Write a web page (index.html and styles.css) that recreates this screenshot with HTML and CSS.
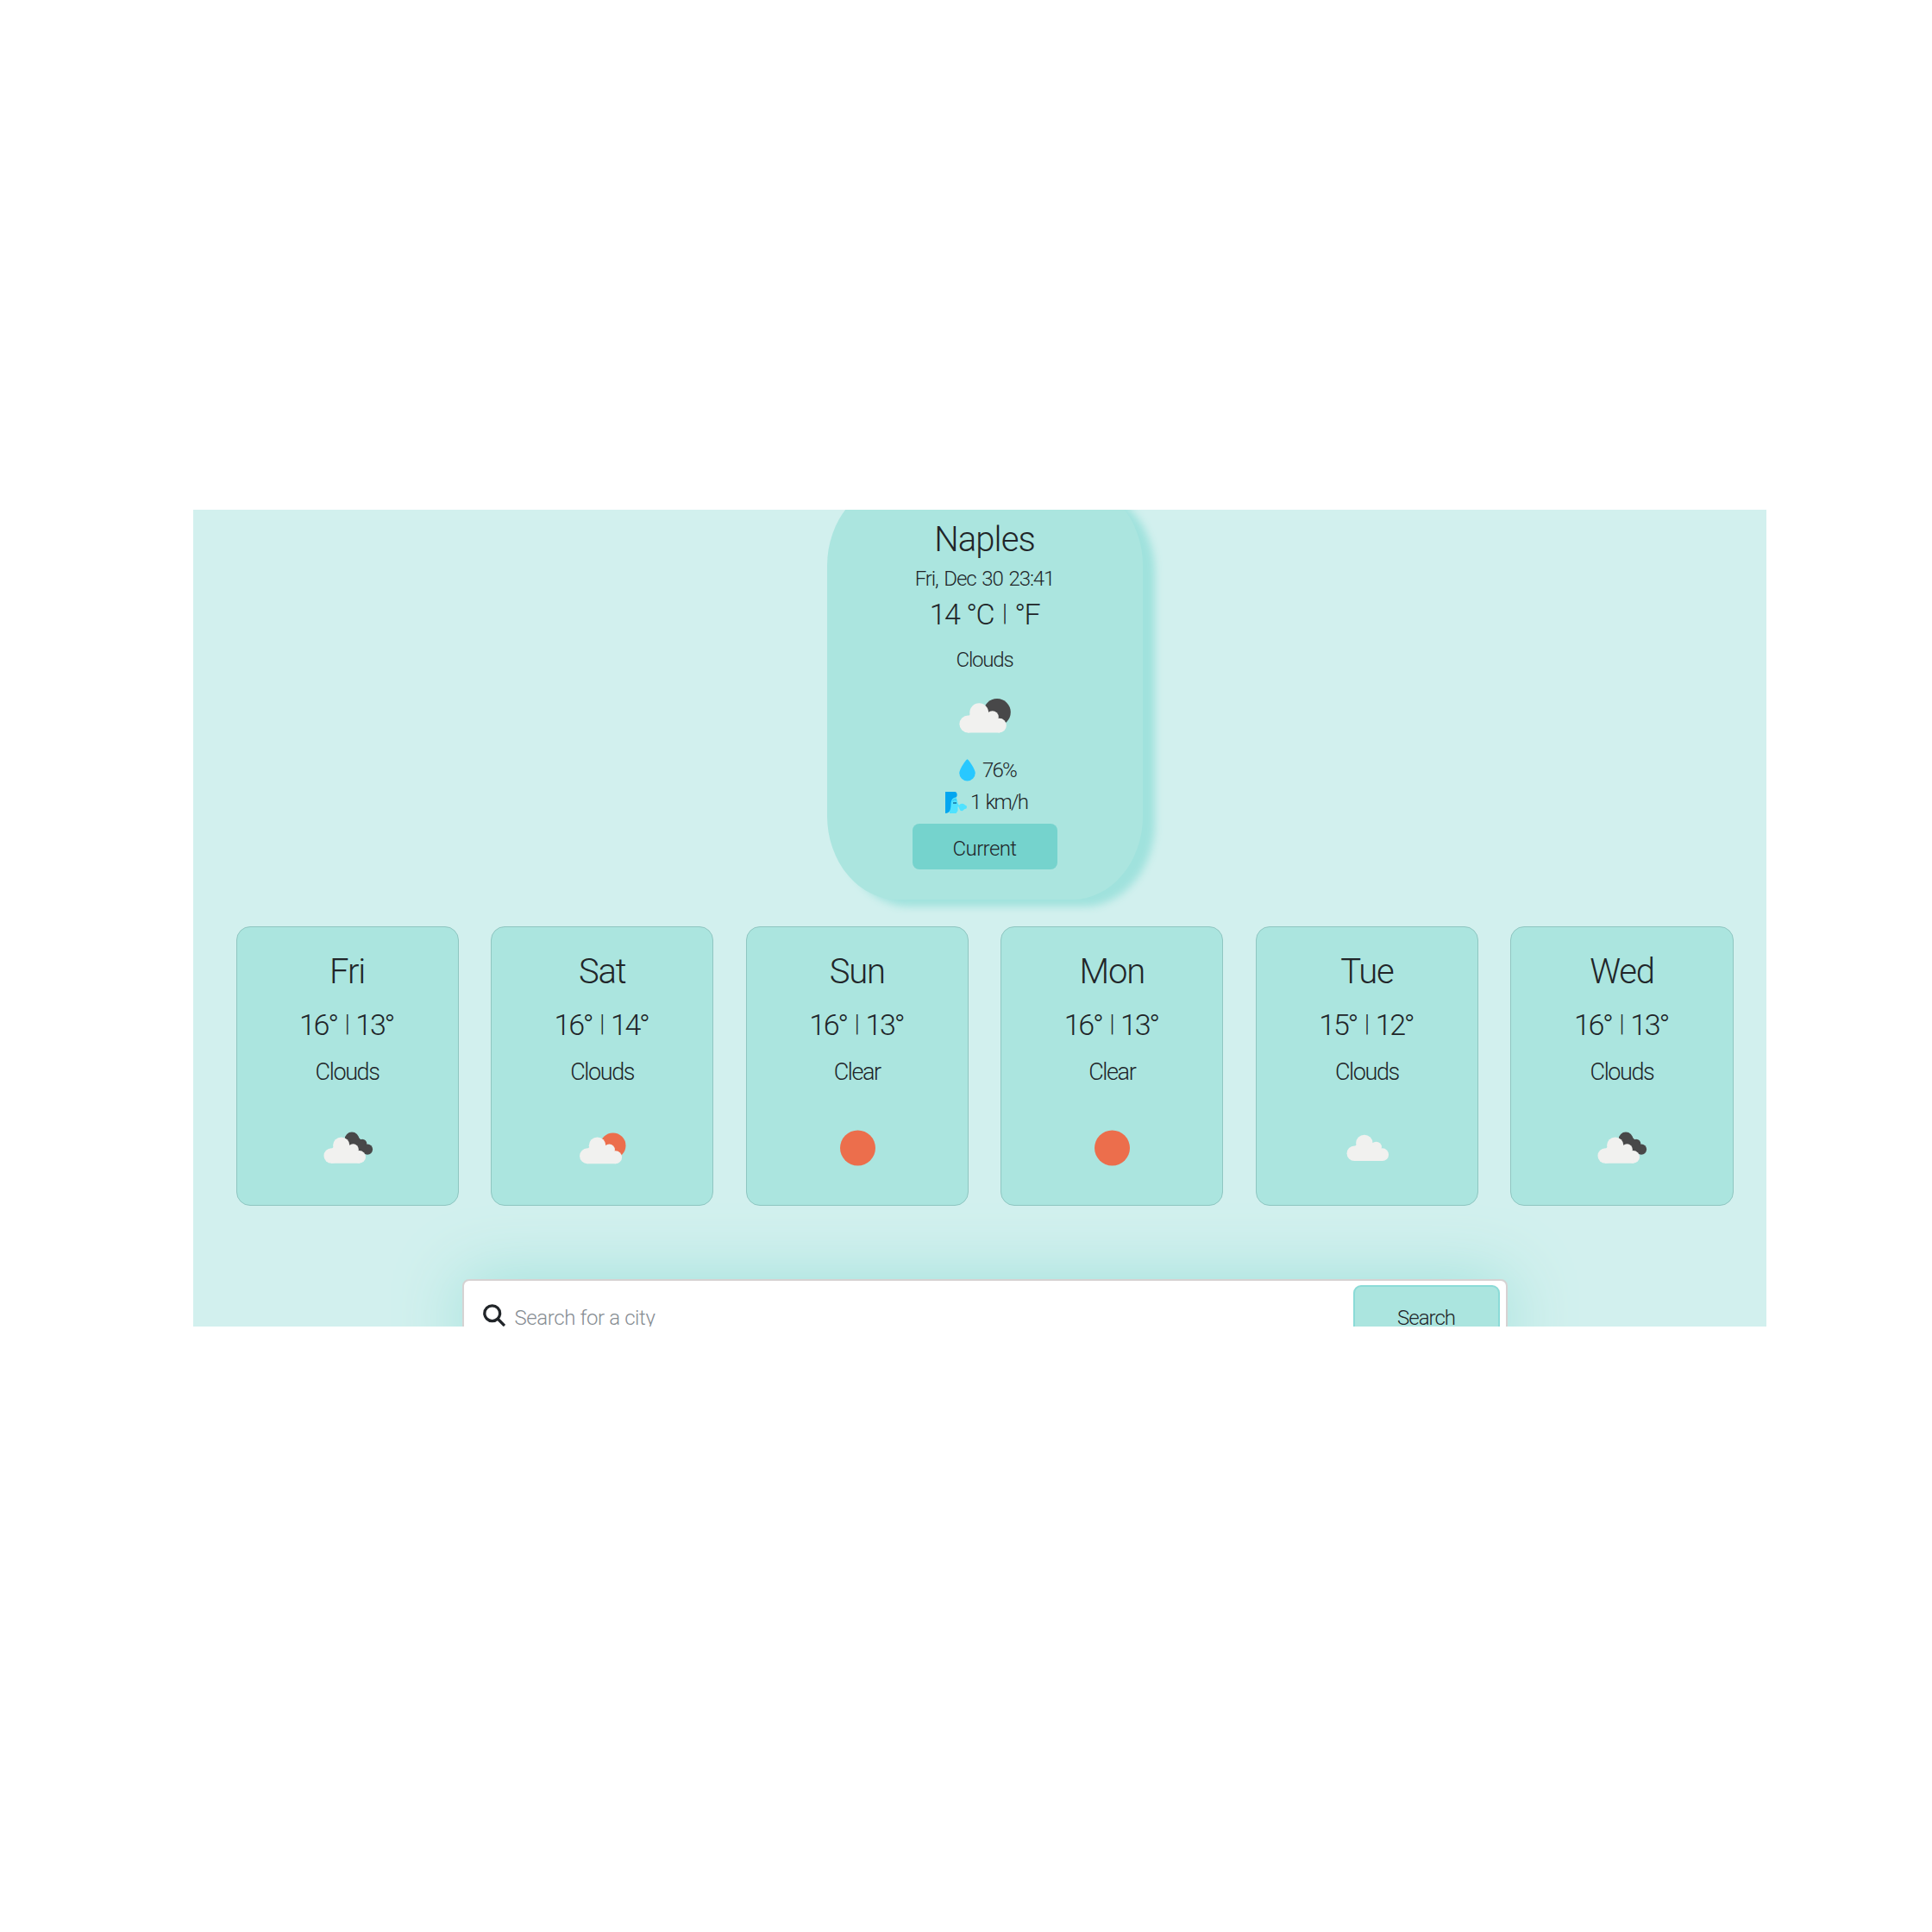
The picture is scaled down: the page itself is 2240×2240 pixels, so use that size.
FILE: index.html
```html
<!DOCTYPE html>
<html lang="en">
<head>
<meta charset="utf-8">
<title>Weather</title>
<link rel="stylesheet" href="styles.css">
</head>
<body>
<svg class="defs" width="0" height="0" aria-hidden="true">
  <symbol id="cloud" viewBox="0 0 60 42" overflow="visible">
    <g fill="#f1f1ef"><circle cx="10.3" cy="29.5" r="9.9"/><circle cx="23.2" cy="16.2" r="10.9"/><circle cx="38.6" cy="21.4" r="7.2"/><circle cx="46.6" cy="31.1" r="8.3"/><path d="M10 21l5-5h24l4 7 4 3v13.4H10z"/></g>
  </symbol>
  <symbol id="broken" viewBox="0 0 60 60" overflow="visible">
    <g fill="#484849"><circle cx="35" cy="19.8" r="8.3"/><circle cx="47" cy="25" r="5.3"/><circle cx="53" cy="31.6" r="6.1"/><path d="M33 20l8-4 8 8 4 11-5 2-14-8z"/></g>
    <use href="#cloud" x="0" y="0" width="60" height="42" transform="translate(2.1 12.7) scale(.89)"/>
  </symbol>
</svg>
<main class="stage">
  <section class="current">
    <h1 class="city">Naples</h1>
    <p class="date">Fri, Dec 30 23:41</p>
    <p class="now">14 <span class="unit">°C</span> <span class="bar">|</span> <span class="unit">°F</span></p>
    <p class="sky">Clouds</p>
    <svg class="now-icon" width="60" height="40" viewBox="0 0 60 40"><circle cx="44" cy="15.8" r="15.8" fill="#484849"/><use href="#cloud" width="60" height="42"/></svg>
    <p class="fact humidity"><svg width="19" height="26" viewBox="0 0 19 26"><path d="M9.5.3C10.6.3 18.7 11.5 18.7 16.3a9.2 9.2 0 0 1-18.4 0C.3 11.5 8.4.3 9.5.3z" fill="#28c8ff"/></svg><span>76%</span></p>
    <p class="fact wind"><svg width="25" height="25" viewBox="0 0 25 25"><path d="M5 25V12l3-5h5l1.5 6 1.5 3-1.5 1.5V22l-2 3z" fill="#50e2ff"/><path d="M0 0h11c3 0 3.5 5 1.5 6.5C8 7 6.5 10 6.5 15 6.3 21 5 25 0 25z" fill="#02a6f0"/><path d="M8.5 10.5q2-2.5 4.5-1" fill="none" stroke="#28c0f0"/><path d="M9 13h4" stroke="#1479a8" stroke-width="1.6"/><circle cx="19.5" cy="17.5" r="3.7" fill="#50e2ff"/><circle cx="22.7" cy="17.8" r="2.3" fill="#50e2ff"/><circle cx="19" cy="20" r="2.2" fill="#50e2ff"/><path d="M15 16l4 0v3h-3z" fill="#50e2ff"/></svg><span>1 km/h</span></p>
    <button class="locate"><span>Current</span></button>
  </section>
  <section class="forecast">
    <article class="day"><h2 class="name">Fri</h2><p class="temps">16° <span class="bar">|</span> 13°</p><p class="cond">Clouds</p><svg class="icon" viewBox="0 0 60 60"><use href="#broken" width="60" height="60"/></svg></article>
    <article class="day"><h2 class="name">Sat</h2><p class="temps">16° <span class="bar">|</span> 14°</p><p class="cond">Clouds</p><svg class="icon" viewBox="0 0 60 60"><circle cx="42.7" cy="27.2" r="14.8" fill="#ec6e4c"/><use href="#cloud" width="60" height="42" transform="translate(3.7 12.7) scale(.9)"/></svg></article>
    <article class="day"><h2 class="name">Sun</h2><p class="temps">16° <span class="bar">|</span> 13°</p><p class="cond">Clear</p><svg class="icon" viewBox="0 0 60 60"><circle cx="30.5" cy="30" r="20.5" fill="#ec6e4c"/></svg></article>
    <article class="day"><h2 class="name">Mon</h2><p class="temps">16° <span class="bar">|</span> 13°</p><p class="cond">Clear</p><svg class="icon" viewBox="0 0 60 60"><circle cx="30.5" cy="30" r="20.5" fill="#ec6e4c"/></svg></article>
    <article class="day"><h2 class="name">Tue</h2><p class="temps">15° <span class="bar">|</span> 12°</p><p class="cond">Clouds</p><svg class="icon" viewBox="0 0 60 60"><use href="#cloud" width="60" height="42" transform="translate(6.2 10) scale(.89)"/></svg></article>
    <article class="day"><h2 class="name">Wed</h2><p class="temps">16° <span class="bar">|</span> 13°</p><p class="cond">Clouds</p><svg class="icon" viewBox="0 0 60 60"><use href="#broken" width="60" height="60"/></svg></article>
  </section>
  <form class="search">
    <svg class="glass" width="26" height="26" viewBox="0 0 26 26" fill="none" stroke="#212529" stroke-width="3.3"><circle cx="10.7" cy="10.7" r="8.9"/><path d="M17 17l8 8"/></svg>
    <span class="placeholder">Search for a city</span>
    <button class="submit" type="button">Search</button>
  </form>
</main>
</body>
</html>
```
FILE: styles.css
```css
* { box-sizing: border-box; }
body { margin: 0; background: #fff; font-family: Roboto, "Liberation Sans", sans-serif; font-weight: 300; color: #212529; }
h1, h2, p { margin: 0; font-weight: 300; white-space: nowrap; }
svg { display: block; flex: none; }
.defs { position: absolute; }
button { font: inherit; color: inherit; padding: 0; border: 0; }
.stage { width: 1824px; height: 947px; margin: 591px 0 0 224px; padding: 0 38.5px 0 49.5px; background: #d2f0ee; overflow: hidden; display: flex; flex-direction: column; align-items: center; }

.current { flex: none; width: 366px; height: 484px; margin-top: -32px; padding-top: 43px; border-radius: 82px / 97px; background: #abe5df; box-shadow: 14px 8px 10px #a0e2dd; display: flex; flex-direction: column; align-items: center; }
.city { font-size: 40px; line-height: 48px; letter-spacing: -.9px; }
.date { margin-top: 6px; font-size: 24px; line-height: 30px; letter-spacing: -1.1px; word-spacing: 2px; }
.now { margin-top: 6px; font-size: 34px; line-height: 40px; letter-spacing: -1.5px; word-spacing: 1px; }
.sky { margin-top: 18px; font-size: 24px; line-height: 30px; letter-spacing: -1.2px; }
.now-icon { margin-top: 30px; }
.fact { display: flex; align-items: center; font-size: 24px; line-height: 30px; }
.humidity { margin: 28px 0 0 7px; gap: 8px; letter-spacing: -1.8px; }
.wind { margin: 7px 0 0 4px; gap: 4px; letter-spacing: -1.8px; word-spacing: 2px; }
.locate { margin-top: 10px; width: 168px; height: 53px; padding-top: 4px; border-radius: 8px; background: #75d3cd; font-size: 24px; line-height: 30px; letter-spacing: -.6px; }
.bar { margin: 0 2px; font-size: 27px; line-height: 0; vertical-align: 4px; }

.forecast { flex: none; align-self: stretch; margin-top: 31px; display: grid; grid-template-columns: repeat(6, 1fr); gap: 37.5px; }
.day { height: 324px; padding-top: 28px; border: 1px solid #8fc6c1; border-radius: 16px; background: #abe5df; display: flex; flex-direction: column; align-items: center; }
.name { font-size: 40px; line-height: 48px; letter-spacing: -1.2px; }
.temps { margin: 17px 2px 0 0; font-size: 34px; line-height: 40px; letter-spacing: -2.3px; word-spacing: 1px; }
.cond { margin-top: 18px; font-size: 27px; line-height: 34px; letter-spacing: -1.4px; }
.icon { margin-top: 41px; width: 60px; height: 60px; }

.search { flex: none; width: 1212px; height: 88px; margin-top: 85px; padding: 5px 7px 5px 22px; border: 2px solid #d6d2d2; border-radius: 8px; background: #fff; box-shadow: 0 0 80px #9ee0da; display: flex; align-items: center; font-size: 24px; letter-spacing: -.4px; }
.glass { margin-bottom: 4px; }
.placeholder { flex: 1; margin-left: 11px; padding-top: 2px; color: #878d93; }
.submit { align-self: stretch; width: 170px; padding-top: 2px; border: 2px solid #8bdbd7; border-radius: 9px; background: #abe5df; letter-spacing: -1px; }
```
